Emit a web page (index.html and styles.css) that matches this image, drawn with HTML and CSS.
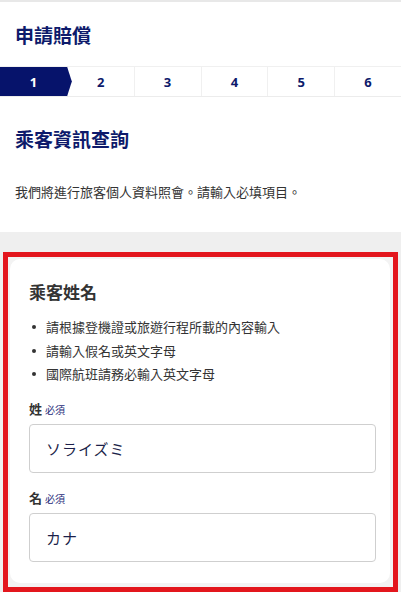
FILE: index.html
```html
<!DOCTYPE html>
<html lang="zh-Hant">
<head>
<meta charset="utf-8">
<link rel="stylesheet" href="styles.css">
</head>
<body>
<div class="topline"></div>
<header class="page-head">
  <h1 class="title">申請賠償</h1>
</header>
<ol class="stepper">
  <li class="step step-active">1</li>
  <li class="step">2</li>
  <li class="step">3</li>
  <li class="step">4</li>
  <li class="step">5</li>
  <li class="step">6</li>
</ol>
<section class="intro">
  <h2 class="subtitle">乘客資訊查詢</h2>
  <p class="lead">我們將進行旅客個人資料照會。請輸入必填項目。</p>
</section>
<section class="gray">
  <div class="highlight">
    <div class="card">
      <h3 class="card-title">乘客姓名</h3>
      <ul class="notes">
        <li>請根據登機證或旅遊行程所載的內容輸入</li>
        <li>請輸入假名或英文字母</li>
        <li>國際航班請務必輸入英文字母</li>
      </ul>
      <label class="field-label">姓 <span class="req">必須</span></label>
      <input class="field" type="text" value="ソライズミ">
      <label class="field-label">名 <span class="req">必須</span></label>
      <input class="field" type="text" value="カナ">
    </div>
  </div>
</section>
</body>
</html>
```

FILE: styles.css
```css
html, body {
  margin: 0;
  padding: 0;
  background: #fff;
  font-family: "Noto Sans CJK TC", "Noto Sans", sans-serif;
  color: #333;
  overflow: hidden;
}

.topline {
  height: 2px;
  background: #e8e8e8;
}

.page-head {
  padding: 20px 15px 18px;
}

.title {
  margin: 0;
  font-size: 19px;
  line-height: 26px;
  font-weight: 700;
  color: #0d1a6b;
}

.stepper {
  list-style: none;
  margin: 0;
  padding: 0;
  display: grid;
  grid-template-columns: repeat(6, 1fr);
  height: 31px;
  border-top: 1px solid #f0f0f0;
  border-bottom: 1px solid #ececec;
  box-sizing: border-box;
}

.step {
  display: flex;
  align-items: center;
  justify-content: center;
  font-family: "Noto Sans", "Open Sans", sans-serif;
  font-weight: 700;
  font-size: 13px;
  color: #0d1a6b;
  border-left: 1px solid #f0f0f0;
  position: relative;
}

.step:first-child {
  border-left: none;
}

.step-active {
  background: #06136b;
  color: #fff;
}

.step-active::after {
  content: "";
  position: absolute;
  top: -1px;
  right: -5px;
  width: 5px;
  height: 31px;
  background: #06136b;
  clip-path: polygon(0 0, 100% 50%, 0 100%);
  z-index: 1;
}

.intro {
  padding: 29px 15px 30px;
}

.subtitle {
  margin: 0;
  font-size: 19px;
  line-height: 26px;
  font-weight: 700;
  color: #0d1a6b;
}

.lead {
  margin: 30px 0 0;
  font-size: 13px;
  line-height: 20px;
  color: #333;
}

.gray {
  background: #efefef;
  padding: 20px 3px 0 3px;
}

.highlight {
  width: 395px;
  box-sizing: border-box;
  border: 5px solid #e3161d;
  padding: 2px 3px 4px 2px;
  background: #f3f3f3;
}

.card {
  background: #fff;
  border-radius: 10px;
  padding: 21px 14px 21px 19px;
  display: flex;
  flex-direction: column;
}

.card-title {
  margin: 0;
  font-size: 17px;
  line-height: 24px;
  font-weight: 700;
  color: #333;
}

.notes {
  list-style: none;
  margin: 11px 0 0;
  padding: 0;
}

.notes li {
  position: relative;
  padding-left: 17px;
  font-size: 13px;
  line-height: 23.5px;
  color: #333;
}

.notes li::before {
  content: "";
  position: absolute;
  left: 3px;
  top: 10px;
  width: 4px;
  height: 4px;
  border-radius: 50%;
  background: #333;
}

.field-label {
  display: block;
  margin-top: 13px;
  margin-bottom: 4px;
  font-size: 13px;
  line-height: 20px;
  font-weight: 700;
  color: #333;
}

.field + .field-label {
  margin-top: 15px;
}

.req {
  font-size: 10px;
  font-weight: 400;
  color: #1f2d7a;
}

.field {
  display: block;
  box-sizing: border-box;
  width: 100%;
  height: 49px;
  margin: 0;
  padding: 0 16px;
  border: 1px solid #cfcfcf;
  border-radius: 4px;
  background: #fff;
  font-family: "Noto Sans CJK JP", "Noto Sans CJK TC", sans-serif;
  font-size: 15px;
  letter-spacing: 1px;
  color: #1c1f4a;
  outline: none;
}
```
